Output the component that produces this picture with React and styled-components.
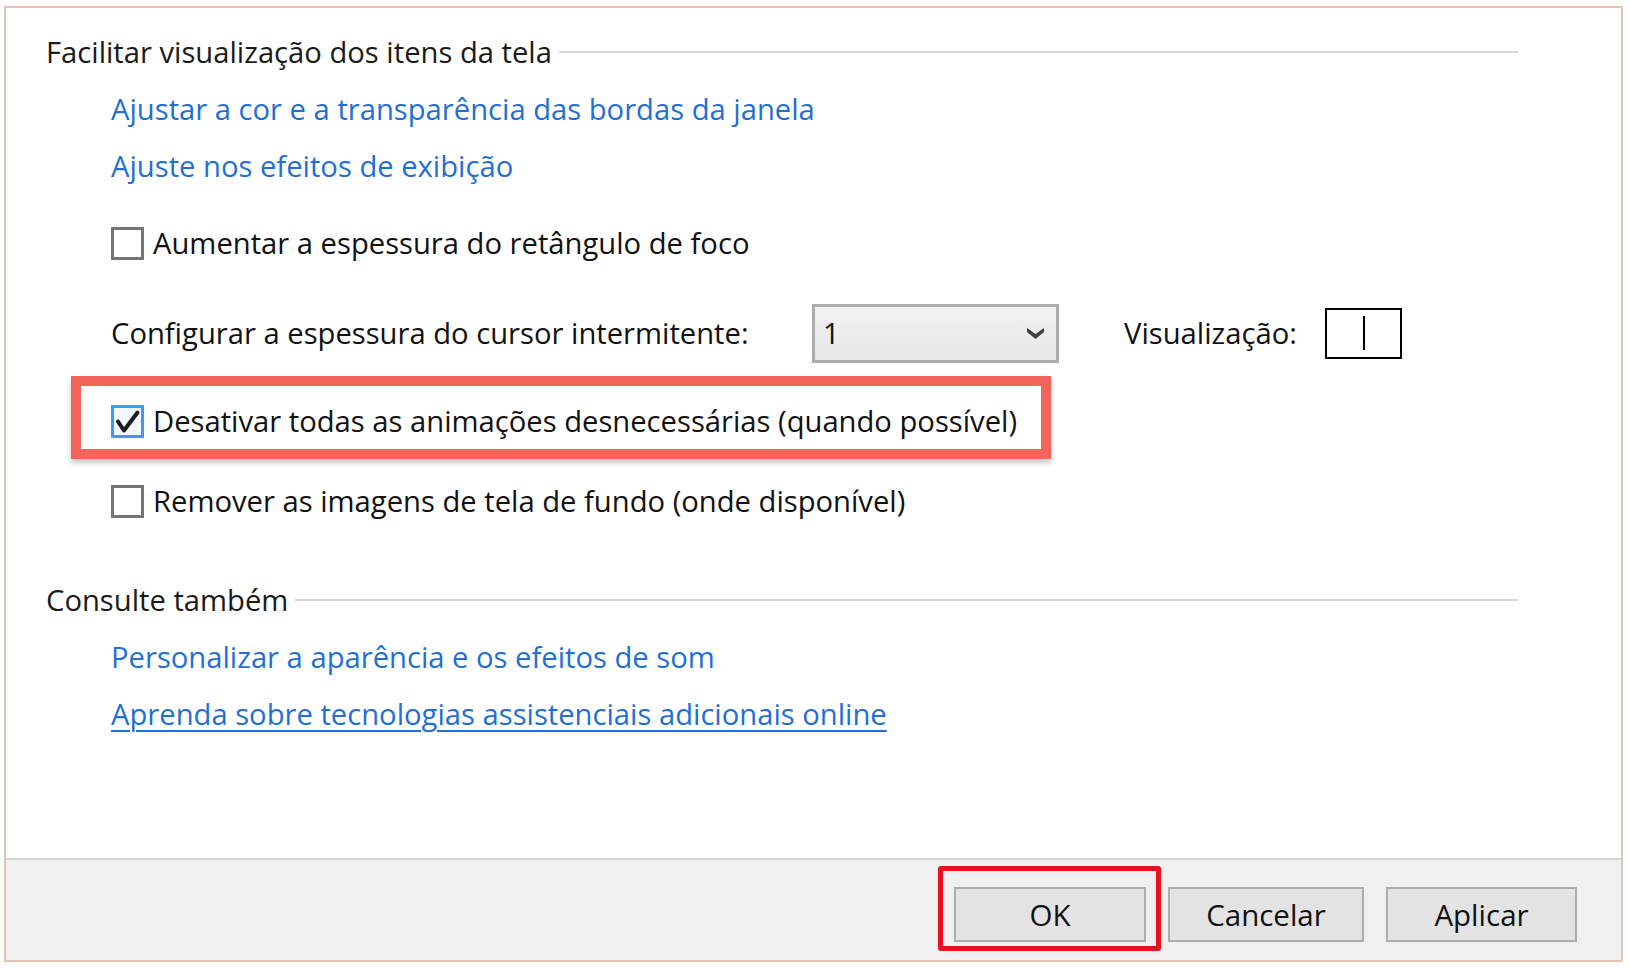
import React from 'react'
import styled, { createGlobalStyle } from 'styled-components'

const GlobalStyle = createGlobalStyle`
  body {
    margin: 0;
    background: #ffffff;
    font-family: 'Open Sans', 'Noto Sans', sans-serif;
  }
`

const Page = styled.div`
  width: 1630px;
  height: 968px;
  box-sizing: border-box;
  padding: 6px 7px 6px 4px;
  background: #ffffff;
`

const Frame = styled.div`
  width: 1619px;
  height: 956px;
  box-sizing: border-box;
  border: 2px solid #e3c4b0;
  display: flex;
  flex-direction: column;
  font-size: 29.2px;
  color: #111;
`

const Content = styled.main`
  flex: 1;
  padding: 24px 0 0 40px;
  display: flex;
  flex-direction: column;
  align-items: flex-start;
`

const SectionHeading = styled.div`
  display: flex;
  align-items: center;
  width: 1472px;
  height: 40px;
  margin-top: ${p => p.$top || 0}px;
`

const HeadingText = styled.span`
  white-space: nowrap;
  color: #1a1a1a;
`

const Rule = styled.div`
  flex: 1;
  height: 2px;
  margin-left: 7px;
  background: #d8d8d8;
`

const LinkRow = styled.a`
  display: flex;
  align-items: center;
  height: 40px;
  margin: ${p => p.$top || 0}px 0 0 65px;
  color: #1f6fd4;
  text-decoration: ${p => (p.$underline ? 'underline' : 'none')};
  text-decoration-thickness: 2px;
  text-underline-offset: 5px;
  white-space: nowrap;
  cursor: pointer;
`

const CheckRow = styled.label`
  display: flex;
  align-items: center;
  height: 40px;
  margin: ${p => p.$top || 0}px 0 0 ${p => (p.$left === undefined ? 65 : p.$left)}px;
  white-space: nowrap;
`

const Box = styled.span`
  width: 33px;
  height: 33px;
  box-sizing: border-box;
  border: 3px solid ${p => (p.$checked ? '#3d99f5' : '#757575')};
  background: ${p => (p.$checked ? '#f2f8ff' : '#ffffff')};
  display: flex;
  align-items: center;
  justify-content: center;
  flex-shrink: 0;
`

const CheckLabel = styled.span`
  margin-left: 9px;
`

const ConfigRow = styled.div`
  display: flex;
  align-items: center;
  height: 60px;
  margin: 40px 0 0 65px;
  white-space: nowrap;
`

const ConfigLabel = styled.span`
  width: 701px;
`

const Select = styled.div`
  width: 247px;
  height: 59px;
  box-sizing: border-box;
  border: 3px solid #adadad;
  background: linear-gradient(180deg, #f2f2f2 0%, #e6e6e6 100%);
  display: flex;
  align-items: center;
  justify-content: space-between;
  padding: 0 12px 0 8px;
`

const PreviewLabel = styled.span`
  margin-left: 65px;
  width: 201px;
`

const PreviewBox = styled.div`
  width: 77px;
  height: 51px;
  box-sizing: border-box;
  border: 2px solid #000;
  display: flex;
  align-items: center;
  justify-content: center;
`

const Caret = styled.div`
  width: 2px;
  height: 34px;
  background: #000;
`

const Highlight = styled.div`
  width: 980px;
  height: 83px;
  box-sizing: border-box;
  margin: 13px 0 0 25px;
  border: 10px solid #f5645a;
  padding: 7px 0 0 30px;
  display: flex;
  align-items: center;
  box-shadow: 0 4px 5px rgba(0, 0, 0, 0.22);
`

const Footer = styled.footer`
  height: 102px;
  box-sizing: border-box;
  border-top: 2px solid #d5d5d5;
  background: #f0f0f0;
  display: flex;
  justify-content: flex-end;
  align-items: flex-start;
  gap: 22px;
  padding: 27px 44px 0 0;
`

const ButtonWrap = styled.div`
  position: relative;
  ${p =>
    p.$marked &&
    `
    &::after {
      content: '';
      position: absolute;
      top: -21px;
      left: -16px;
      right: -15px;
      bottom: -9px;
      border: 5px solid #ea1020;
      border-radius: 3px;
      pointer-events: none;
    }
  `}
`

const Button = styled.button`
  width: ${p => p.$w}px;
  height: 55px;
  box-sizing: border-box;
  border: 2px solid #adadad;
  background: #e3e3e3;
  font-family: 'Open Sans', 'Noto Sans', sans-serif;
  font-size: 29.5px;
  color: #111;
  padding: 0;
  cursor: pointer;
`

const CheckMark = () => (
  <svg width="27" height="27" viewBox="0 0 27 27">
    <path d="M4 13.5 L10 22.5 L23.5 4.5" fill="none" stroke="#1c1c1c" strokeWidth="4" strokeLinecap="round" strokeLinejoin="round" />
  </svg>
)

const Chevron = () => (
  <svg width="17" height="12" viewBox="0 0 17 12">
    <path d="M0 1 L8.5 7 L17 1 L17 5 L8.5 12 L0 5 Z" fill="#404040" />
  </svg>
)

const Checkbox = ({ checked, children, top, left }) => (
  <CheckRow $top={top} $left={left}>
    <Box $checked={checked}>{checked && <CheckMark />}</Box>
    <CheckLabel>{children}</CheckLabel>
  </CheckRow>
)

const Heading = ({ top, children }) => (
  <SectionHeading $top={top}>
    <HeadingText>{children}</HeadingText>
    <Rule />
  </SectionHeading>
)

export default function App() {
  return (
    <Page>
      <GlobalStyle />
      <Frame>
        <Content>
          <Heading>Facilitar visualização dos itens da tela</Heading>
          <LinkRow $top={17}>Ajustar a cor e a transparência das bordas da janela</LinkRow>
          <LinkRow $top={17}>Ajuste nos efeitos de exibição</LinkRow>
          <Checkbox top={37}>Aumentar a espessura do retângulo de foco</Checkbox>
          <ConfigRow>
            <ConfigLabel>Configurar a espessura do cursor intermitente:</ConfigLabel>
            <Select>
              <span>1</span>
              <Chevron />
            </Select>
            <PreviewLabel>Visualização:</PreviewLabel>
            <PreviewBox>
              <Caret />
            </PreviewBox>
          </ConfigRow>
          <Highlight>
            <Checkbox checked left={0}>Desativar todas as animações desnecessárias (quando possível)</Checkbox>
          </Highlight>
          <Checkbox top={22}>Remover as imagens de tela de fundo (onde disponível)</Checkbox>
          <Heading top={59}>Consulte também</Heading>
          <LinkRow $top={17}>Personalizar a aparência e os efeitos de som</LinkRow>
          <LinkRow $top={17} $underline>Aprenda sobre tecnologias assistenciais adicionais online</LinkRow>
        </Content>
        <Footer>
          <ButtonWrap $marked>
            <Button $w={192}>OK</Button>
          </ButtonWrap>
          <ButtonWrap>
            <Button $w={196}>Cancelar</Button>
          </ButtonWrap>
          <ButtonWrap>
            <Button $w={191}>Aplicar</Button>
          </ButtonWrap>
        </Footer>
      </Frame>
    </Page>
  )
}
